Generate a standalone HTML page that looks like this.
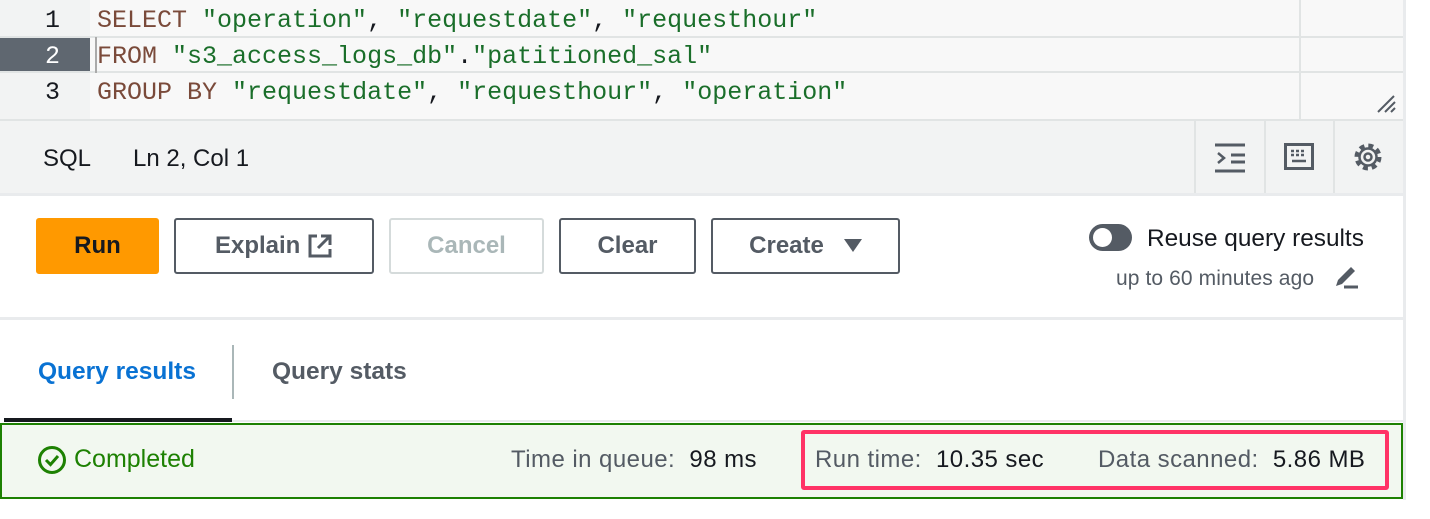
<!DOCTYPE html>
<html><head><style>
body{margin:0;width:1430px;height:519px;background:#fff;position:relative;overflow:hidden;font-family:"Liberation Sans",sans-serif;}
.a{position:absolute;}
.mono{font-family:"Liberation Mono",monospace;font-size:25px;white-space:pre;}
.k{color:#7a4a3a}.s{color:#1a6e2a}.p{color:#16191f}
.btn{position:absolute;top:218px;height:56px;box-sizing:border-box;border:2px solid #545b64;border-radius:3px;background:#fff;font-weight:bold;font-size:24px;color:#545b64;display:flex;align-items:center;justify-content:center;}
.st{font-size:24px;color:#545b64;letter-spacing:0.45px;white-space:pre}
</style></head><body>
<div class="a" style="left:0;top:0;width:1403px;height:120px;background:#f8f8f8;"></div>
<div class="a" style="left:0;top:0;width:90px;height:120px;background:#f2f3f3;"></div>
<div class="a" style="left:0;top:37px;width:90px;height:36px;background:#5f6770;"></div>
<div class="a" style="left:0;top:36px;width:1403px;height:2px;background:#e1e4e4;"></div>
<div class="a" style="left:0;top:71px;width:1403px;height:2px;background:#e1e4e4;"></div>
<div class="a" style="left:1299px;top:0;width:2px;height:120px;background:#e1e4e4;"></div>
<div class="a" style="left:95px;top:37px;width:2px;height:36px;background:#aaa;"></div>
<div class="a mono" style="left:45px;top:6px;color:#16191f">1</div>
<div class="a mono" style="left:45px;top:42px;color:#fff">2</div>
<div class="a mono" style="left:45px;top:78px;color:#16191f">3</div>
<div class="a mono" style="left:97px;top:6px"><span class="k">SELECT</span> <span class="s">"operation"</span><span class="p">,</span> <span class="s">"requestdate"</span><span class="p">,</span> <span class="s">"requesthour"</span></div>
<div class="a mono" style="left:97px;top:42px"><span class="k">FROM</span> <span class="s">"s3_access_logs_db"</span><span class="p">.</span><span class="s">"patitioned_sal"</span></div>
<div class="a mono" style="left:97px;top:78px"><span class="k">GROUP BY</span> <span class="s">"requestdate"</span><span class="p">,</span> <span class="s">"requesthour"</span><span class="p">,</span> <span class="s">"operation"</span></div>
<svg class="a" style="left:1376px;top:94px" width="22" height="20"><path d="M2 18L18 2M9 18L19 8M15 18L19 14" stroke="#545b64" stroke-width="2"/></svg>
<div class="a" style="left:0;top:119px;width:1403px;height:2px;background:#e1e4e4;"></div>
<div class="a" style="left:0;top:121px;width:1403px;height:72px;background:#f2f3f3;border-bottom:3px solid #e9ebed;"></div>
<div class="a" style="left:43px;top:145px;font-size:24px;color:#16191f">SQL</div>
<div class="a" style="left:133px;top:145px;font-size:24px;color:#16191f">Ln 2, Col 1</div>
<div class="a" style="left:1194px;top:121px;width:2px;height:72px;background:#e1e4e4"></div>
<div class="a" style="left:1264px;top:121px;width:2px;height:72px;background:#e1e4e4"></div>
<div class="a" style="left:1333px;top:121px;width:2px;height:72px;background:#e1e4e4"></div>
<svg class="a" style="left:1214px;top:142px" width="32" height="32"><path d="M1 3H31M17 13H31M17 20H31M1 29H31" stroke="#545b64" stroke-width="3"/><path d="M4 11L10 16L4 21" stroke="#545b64" stroke-width="2.5" fill="none"/></svg>
<svg class="a" style="left:1284px;top:143px" width="30" height="28"><rect x="1.5" y="1.5" width="27" height="24" stroke="#545b64" stroke-width="3" fill="none"/><path d="M7 8h3M12 8h3M17 8h3M7 12h3M12 12h3M17 12h3M8 18h14" stroke="#545b64" stroke-width="2.5"/></svg>
<svg class="a" style="left:1353px;top:142px" width="30" height="30" viewBox="0 0 30 30"><circle cx="15" cy="15" r="11.5" fill="none" stroke="#545b64" stroke-width="4" stroke-dasharray="5 4.03"/><circle cx="15" cy="15" r="8.5" fill="#f2f3f3" stroke="#545b64" stroke-width="2.5"/><circle cx="15" cy="15" r="3.5" fill="none" stroke="#545b64" stroke-width="2.5"/></svg>
<div class="a" style="left:1403px;top:0;width:3px;height:500px;background:#e9ebed"></div>
<div class="btn" style="left:36px;width:123px;background:#ff9900;border-color:#ff9900;color:#16191f">Run</div>
<div class="btn" style="left:174px;width:200px;">Explain&nbsp;<svg width="26" height="26" viewBox="0 0 26 26"><path d="M10 3H3V23H23V16" fill="none" stroke="#545b64" stroke-width="3"/><path d="M14 3H23V12M23 3L11 15" fill="none" stroke="#545b64" stroke-width="3"/></svg></div>
<div class="btn" style="left:389px;width:155px;border-color:#d5dbdb;color:#aab7b8">Cancel</div>
<div class="btn" style="left:559px;width:137px;">Clear</div>
<div class="btn" style="left:711px;width:189px;">Create&nbsp;&nbsp;&nbsp;<svg width="18" height="14"><path d="M0 0H18L9 13Z" fill="#545b64"/></svg></div>
<div class="a" style="left:1089px;top:224px;width:43px;height:27px;border-radius:14px;background:#545b64"></div>
<div class="a" style="left:1093px;top:228px;width:19px;height:19px;border-radius:50%;background:#fff"></div>
<div class="a" style="left:1147px;top:225px;font-size:24.4px;color:#16191f">Reuse query results</div>
<div class="a" style="left:1116px;top:267px;font-size:21px;color:#545b64;letter-spacing:0.1px">up to 60 minutes ago</div>
<svg class="a" style="left:1333px;top:264px" width="26" height="26"><path d="M3 22L5 16L18 3L22 7L9 20Z" fill="#545b64"/><path d="M11 23H25" stroke="#545b64" stroke-width="3"/></svg>
<div class="a" style="left:0;top:317px;width:1403px;height:3px;background:#e9ebed"></div>
<div class="a" style="left:38px;top:358px;font-size:24.5px;font-weight:bold;color:#0972d3">Query results</div>
<div class="a" style="left:232px;top:345px;width:2px;height:54px;background:#aab7b8"></div>
<div class="a" style="left:272px;top:358px;font-size:24.5px;font-weight:bold;color:#545b64">Query stats</div>
<div class="a" style="left:4px;top:418px;width:228px;height:4px;background:#16191f"></div>
<div class="a" style="left:232px;top:420px;width:1171px;height:2px;background:#e9ebed"></div>
<div class="a" style="left:0;top:423px;width:1403px;height:76px;box-sizing:border-box;border:2px solid #1d8102;background:#f2f8f0"></div>
<svg class="a" style="left:37px;top:445px" width="30" height="30"><circle cx="15" cy="15" r="12.5" fill="none" stroke="#1d8102" stroke-width="3"/><path d="M9 15L13.5 19.5L21 11" fill="none" stroke="#1d8102" stroke-width="3"/></svg>
<div class="a" style="left:74px;top:445px;font-size:25px;color:#1d8102">Completed</div>
<div class="a st" style="left:511px;top:446px">Time in queue:  <span style="color:#16191f">98 ms</span></div>
<div class="a" style="left:801px;top:430px;width:588px;height:60px;box-sizing:border-box;border:4px solid #ff3366;border-radius:3px"></div>
<div class="a st" style="left:815px;top:446px">Run time:  <span style="color:#16191f">10.35 sec</span></div>
<div class="a st" style="left:1098px;top:446px">Data scanned:  <span style="color:#16191f">5.86 MB</span></div>
</body></html>
